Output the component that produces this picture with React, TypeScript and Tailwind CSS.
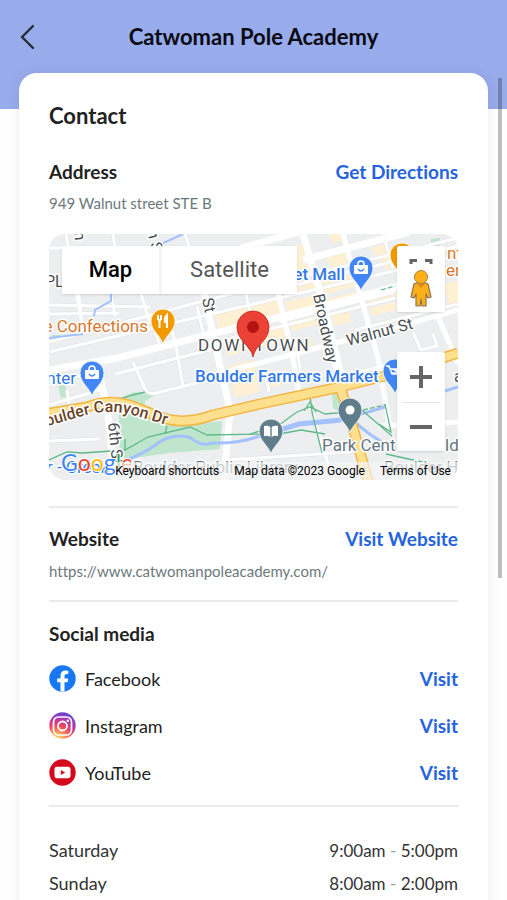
import type { ReactNode } from "react";

const hours = [
  { day: "Saturday", time: ["9:00am", "5:00pm"] },
  { day: "Sunday", time: ["8:00am", "2:00pm"] },
];

function Pin({ x, y, color, children }: { x: number; y: number; color: string; children?: ReactNode }) {
  return (
    <g transform={`translate(${x} ${y})`}>
      <path d="M0 23 C-2 15 -12 10 -12 0 A12 12 0 0 1 12 0 C12 10 2 15 0 23Z" fill={color} stroke="#fff" strokeWidth="0.8" />
      {children}
    </g>
  );
}

function Bag() {
  return (
    <>
      <rect x="-7" y="-3" width="14" height="9" rx="1" fill="#fff" />
      <path d="M-3 -2 V-4 A3 3 0 0 1 3 -4 V-2" fill="none" stroke="#fff" strokeWidth="1.6" />
      <path d="M-3 1 Q0 5 3 1" fill="none" stroke="#4285f4" strokeWidth="1.4" />
    </>
  );
}

function StreetMap() {
  return (
    <svg
      viewBox="0 0 409 246"
      preserveAspectRatio="xMidYMid slice"
      className="block h-full w-full font-['Roboto',sans-serif]"
      role="img"
      aria-label="Map of downtown Boulder"
    >
      <rect width="409" height="246" fill="#eceef0" />
      <g fill="#fdf0d3">
        <path d="M166 80 L232 64 L236 78 L169 95Z M207 42 L222 38 L226 52 L210 56Z M226 18 L256 10 L264 40 L232 48Z" />
        <path d="M230 52 L264 44 L268 56 L233 65Z M236 68 L270 60 L274 72 L239 80Z M240 85 L276 76 L279 88 L243 97Z" />
        <path d="M277 24 L296 19 L299 30 L282 34Z M272 48 L306 40 L309 52 L276 60Z M277 65 L311 57 L314 68 L280 76Z M283 81 L300 77 L302 88 L285 92Z" />
        <path d="M280 0 L293 -3 L296 6 L283 9Z M322 14 L338 10 L346 34 L338 36Z M315 58 L346 50 L349 62 L318 70Z M320 74 L346 68 L348 76 L323 82Z M395 50 L409 46 L409 70 L400 72Z" />
        <path d="M174 108 L236 92 L240 106 L178 122Z M178 132 L205 126 L210 158 L186 164Z M246 108 L262 104 L264 113 L248 116Z M216 142 L232 136 L234 150 L218 154Z" />
      </g>
      <g fill="#bfe6cc">
        <path d="M63 167 L85 158 L108 160 L96 167 L96 176Z" />
        <path d="M70 178 Q104 184 128 192 L173 187 L171 215 L120 219 L78 225 L71 228Z" />
        <path d="M283 157 L291 156 L293 180 L284 174Z M9 151 L16 151 L19 163 L12 164Z M382 5 L391 4 L390 12 L382 12Z M3 101 L11 101 L11 105 L3 105Z" />
      </g>
      {/* side streets, with a thin grey edge under the white */}
      <g fill="none" strokeLinejoin="round">
        {["stroke-[#dfe2e5] stroke-[4px]", "stroke-white stroke-[3px]"].map((look) => (
          <g key={look} className={look}>
            <path d="M0 14 H60 M17 0 L32 86 M64 0 L66 14 M136 0 L146 30 M0 71 L101 73 M0 80 L70 79" />
            <path d="M30 60 L34 100 M92 60 L101 90 M62 60 L66 82" />
            <path d="M0 108 L158 66 L409 4 M0 118 L162 80 L409 22 M106 98 L112 114" />
            <path d="M118 78 L127 112 L134 152 M148 72 L154 98 M196 56 L202 82" />
            <path d="M0 171 L54 155 M0 148 L40 140 M18 156 L20 170 M66 140 L168 114" />
            <path d="M84 128 L97 157 Q101 161 107 159 L172 143" />
            <path d="M202 80 L206 108 M216 138 L220 158 M246 104 L252 140 M278 108 L286 136" />
            <path d="M334 0 L344 34 M230 55 L409 12 M306 96 L409 70 M364 98 L372 116 L388 112 L384 100" />
            <path d="M174 106 L250 88 L346 64 M230 88 L346 58 M300 140 L344 130" />
            <path d="M176 226 L300 218 M264 180 L284 246 M0 207 L50 205" />
          </g>
        ))}
      </g>
      <g fill="none" stroke="#fff" strokeWidth="7" strokeLinejoin="round">
        <path d="M0 136 L68 124 L158 101 L268 74 L350 52" />
        <path d="M180 137 L268 114 L344 94 L409 76" strokeWidth="5" />
        <path d="M153 50 L166 110 L181 176 L175 246" />
        <path d="M228 55 L243 119 L250 160" strokeWidth="5" />
        <path d="M254 0 L273 65 L288 125 L295 153" />
        <path d="M294 0 L311 60 L329 124 L341 194" strokeWidth="5" />
        <path d="M50 140 L58 173 L66 246" />
        <path d="M192 14 L250 -2 M254 26 L360 -2" />
        <path d="M388 80 L409 130 M330 192 L409 188" strokeWidth="5" />
      </g>
      {/* creek */}
      <g fill="none" stroke="#a3c1fb" strokeWidth="3">
        <path d="M78 226 Q98 218 112 207 Q128 199 142 204 Q152 213 163 209 Q188 210 211 202 L250 190 L292 186 L336 173" />
        <path d="M301 183 Q320 203 348 216 M386 160 L409 153" />
        <path d="M112 10 L134 0 M62 60 L62 67 L46 76 L45 82 M0 104 L34 100" strokeWidth="2" />
      </g>
      <path d="M211 202 L250 190 L292 186" fill="none" stroke="#a3c1fb" strokeWidth="5" />
      <g fill="none" stroke="#60b98a" strokeWidth="1.3">
        <path d="M0 226 L18 218 L34 219 L76 216 L99 203 L141 193 L158 201 L211 200 M64 167 L84 161 L96 158 M118 192 L116 200 M76 205 L76 216" />
        <path d="M201 200 L230 191 L248 178 L261 173 L276 180 L300 178 L314 177 M261 162 L263 178 L273 219 M255 177 L261 168 L267 178 M230 200 L252 196 L276 200" />
        <path d="M314 177 L343 202 M330 190 L342 198 L336 170 M337 220 L382 230" />
        <path d="M314 176 L336 171 M332 56 L346 52" strokeDasharray="5 2" />
      </g>
      {/* main highway */}
      <g fill="none" strokeLinejoin="round">
        <path d="M-4 180 L38 173 Q64 163 88 174 L114 184 Q136 191 164 181 L211 170 L291 153 L348 139 L409 119 M291 153 L301 183 L320 250" stroke="#f2b541" strokeWidth="11" />
        <path d="M-4 180 L38 173 Q64 163 88 174 L114 184 Q136 191 164 181 L211 170 L291 153 L348 139 L409 119 M291 153 L301 183 L320 250" stroke="#fde08e" strokeWidth="8" />
      </g>

      {/* street names */}
      <g fontSize="16" fill="#4b4f53" stroke="#fff" strokeWidth="3" paintOrder="stroke" strokeLinejoin="round">
        <text transform="translate(299 112) rotate(-15)">Walnut St</text>
        <text transform="translate(264 61) rotate(78)">Broadway</text>
        <text transform="translate(153 65) rotate(78)">St</text>
        <text transform="translate(59 189) rotate(84)">6th St</text>
        <text transform="translate(25 -2) rotate(84)">h</text>
        <text transform="translate(98 -3) rotate(76)">h S</text>
        <text x="-4" y="53">PL</text>
        <text x="405" y="148">a</text>
        <text x="149" y="117" fontSize="17" className="tracking-widest">DOWNTOWN</text>
      </g>
      <path id="canyon" d="M-12 195 L30 183 Q58 174 84 181 L134 196" fill="none" />
      <text fontSize="16" fontWeight="500" fill="#6a4328" stroke="#fff" strokeWidth="3" paintOrder="stroke">
        <textPath href="#canyon">Boulder Canyon Dr</textPath>
      </text>

      {/* place names */}
      <g fontSize="17" stroke="#fff" strokeWidth="3" paintOrder="stroke" strokeLinejoin="round">
        <g fill="#d8782d">
          <text x="99" y="98" textAnchor="end">e Confections</text>
          <text x="398" y="25">nt</text>
          <text x="397" y="42">er</text>
        </g>
        <g fill="#3179e8" fontWeight="500">
          <text x="296" y="46" textAnchor="end">et Mall</text>
          <text x="27" y="150" textAnchor="end" fontWeight="400">nter</text>
          <text x="146" y="148">Boulder Farmers Market</text>
          <text x="-2" y="239" fontWeight="400">r - Creek</text>
        </g>
        <g fill="#64757e">
          <text x="273" y="217">Park Cent</text>
          <text x="396" y="217">ld</text>
          <text x="84" y="239">Boulder Public Library</text>
          <text x="335" y="239">Boulder Hi</text>
        </g>
      </g>

      <Pin x={353} y={21} color="#f29900" />
      <Pin x={114} y={87} color="#f29900">
        <path d="M-5 -6 V-1 M-2 -6 V-1 M-3.5 -1 V7 M-5 -1 H-2 M4 7 V-6 Q1 -3 2 1 H4" fill="none" stroke="#fff" strokeWidth="2" />
      </Pin>
      <Pin x={312} y={34} color="#4285f4"><Bag /></Pin>
      <Pin x={43} y={139} color="#4285f4"><Bag /></Pin>
      <Pin x={346} y={137} color="#4285f4">
        <path d="M-9 -5 H-6 L-3 3 H5 M-5 -2 H6 L4 2 H-3" fill="#fff" stroke="#fff" strokeWidth="1.5" />
      </Pin>
      <Pin x={222} y={197} color="#607d8b">
        <path d="M-7 -5 Q-3 -6 -0.7 -4 V6 Q-3 4 -7 5Z M7 -5 Q3 -6 0.7 -4 V6 Q3 4 7 5Z" fill="#fff" />
      </Pin>
      <Pin x={301} y={176} color="#607d8b"><circle r="4.5" fill="#fff" /></Pin>
      <g transform="translate(204 93)">
        <path d="M0 30 C-2 18 -16 14 -16 0 A16 16 0 0 1 16 0 C16 14 2 18 0 30Z" fill="#ea4335" stroke="#c5221f" strokeWidth="0.8" />
        <circle r="6" fill="#b31412" />
      </g>
    </svg>
  );
}

function MapPanel() {
  return (
    <div className="relative mt-[21px] h-[246px] overflow-hidden rounded-2xl font-['Roboto',sans-serif]">
      <StreetMap />
      <div className="absolute top-3 left-[13px] flex gap-[3px] bg-[#f4f4f4] text-[22px] leading-6 shadow-sm">
        <button type="button" className="h-12 w-[97px] bg-white font-medium text-black">Map</button>
        <button type="button" className="h-12 w-[135px] bg-white text-[#565656]">Satellite</button>
      </div>
      <div className="absolute top-3 right-[13px] h-[66px] w-12 rounded-xs bg-white shadow-sm">
        <button type="button" aria-label="Toggle fullscreen view" className="block h-6 w-12">
          <svg viewBox="0 0 48 24" className="h-6 w-12" fill="none" stroke="#666" strokeWidth="3">
            <path d="M14 18 V14.5 H20 M28 14.5 H34 V18" />
          </svg>
        </button>
        <button type="button" aria-label="Street View pegman" className="block h-[42px] w-12">
          <svg viewBox="0 0 48 42" className="h-[42px] w-12">
            <path d="M17 14 Q24 10 31 14 L34 27 L31 28 L29 24 L29 36 H25 L24 29 L23 36 H19 L19 24 L17 28 L14 27Z" fill="#fbb017" stroke="#8b7355" strokeWidth="1.2" strokeLinejoin="round" />
            <path d="M19 13 H29 L24 18Z" fill="#e58a1f" />
            <circle cx="24" cy="7" r="6.5" fill="#fbb017" stroke="#a98342" strokeWidth="1" />
          </svg>
        </button>
      </div>
      <div className="absolute right-[13px] bottom-[29px] w-12 rounded-xs bg-white shadow-sm">
        <button type="button" aria-label="Zoom in" className="flex h-[50px] w-12 items-center justify-center">
          <svg viewBox="0 0 22 22" className="h-[22px] w-[22px]" stroke="#666" strokeWidth="4"><path d="M0 11 H22 M11 0 V22" /></svg>
        </button>
        <div className="mx-[5px] h-px bg-[#e6e6e6]" />
        <button type="button" aria-label="Zoom out" className="flex h-12 w-12 items-center justify-center">
          <svg viewBox="0 0 22 22" className="h-[22px] w-[22px]" stroke="#666" strokeWidth="4"><path d="M0 11 H22" /></svg>
        </button>
      </div>
      <a href="#google" aria-label="Google" className="absolute bottom-0 left-3">
        <svg viewBox="0 0 70 30" className="h-[30px] w-[70px]" fontSize="23" stroke="#fff" strokeWidth="2" paintOrder="stroke">
          <text x="0" y="21" className="font-['Lato',sans-serif]">
            <tspan fill="#4285f4">G</tspan>
            <tspan fill="#ea4335">o</tspan>
            <tspan fill="#fbbc05">o</tspan>
            <tspan fill="#4285f4">g</tspan>
            <tspan fill="#34a853">l</tspan>
            <tspan fill="#ea4335">e</tspan>
          </text>
        </svg>
      </a>
      <div className="absolute right-0 bottom-0 flex h-[18px] items-center gap-[15px] bg-[#f5f5f5]/70 pr-[7px] text-xs whitespace-nowrap text-black">
        <button type="button">Keyboard shortcuts</button>
        <span>Map data ©2023 Google</span>
        <a href="#terms">Terms of Use</a>
      </div>
    </div>
  );
}

const icons = {
  Facebook: (
    <svg viewBox="0 0 27 27" className="h-[27px] w-[27px]" aria-hidden="true">
      <circle cx="13.5" cy="13.5" r="13.2" fill="#1877f2" />
      <path d="M11.5 26.6 V17.3 H8.2 V13.5 H11.5 V10.6 C11.5 7.3 13.5 5.5 16.5 5.5 C17.9 5.5 19.3 5.8 19.3 5.8 V9 H17.7 C16 9 15.5 10 15.5 11.1 V13.5 H19.2 L18.6 17.3 H15.5 V26.6 Z" fill="#fff" />
    </svg>
  ),
  Instagram: (
    <svg viewBox="0 0 27 27" className="h-[27px] w-[27px]" aria-hidden="true">
      <defs>
        <radialGradient id="insta" cx="0.3" cy="1.05" r="1.1">
          <stop offset="0" stopColor="#fee06b" />
          <stop offset="0.25" stopColor="#fca45c" />
          <stop offset="0.5" stopColor="#f0485e" />
          <stop offset="0.72" stopColor="#b936a8" />
          <stop offset="1" stopColor="#5648d8" />
        </radialGradient>
      </defs>
      <circle cx="13.5" cy="13.5" r="13.2" fill="url(#insta)" />
      <rect x="4.5" y="5" width="18" height="18" rx="5" fill="none" stroke="#fff" strokeWidth="1.7" />
      <circle cx="13.5" cy="14" r="4.5" fill="none" stroke="#fff" strokeWidth="1.8" />
      <circle cx="18.8" cy="8.8" r="1.2" fill="#fff" />
    </svg>
  ),
  YouTube: (
    <svg viewBox="0 0 27 27" className="h-[27px] w-[27px]" aria-hidden="true">
      <circle cx="13.5" cy="13.5" r="13.2" fill="#d40a1c" />
      <rect x="5.5" y="7.8" width="16" height="11.4" rx="2.6" fill="#fff" />
      <path d="M11.8 11 L16.2 13.5 L11.8 16Z" fill="#d40a1c" />
    </svg>
  ),
};

const networks = ["Facebook", "Instagram", "YouTube"] as const;

function SectionHead({ title, action }: { title: string; action?: string }) {
  return (
    <div className="flex items-center justify-between text-[19px] leading-[26px] font-bold">
      <h3>{title}</h3>
      {action && <a href="#open" className="text-[#2563e0]">{action}</a>}
    </div>
  );
}

export default function App() {
  return (
    <div className="relative h-screen overflow-hidden bg-[#fefefe] font-['Lato',sans-serif] text-[#222] [font-variant-ligatures:none]">
      <header className="h-[109px] bg-[#98abea]">
        <div className="grid h-[73px] grid-cols-[48px_1fr_48px] items-center">
          <button type="button" aria-label="Back" className="flex h-12 items-center pl-5">
            <svg viewBox="0 0 14 26" className="h-[26px] w-[14px]" fill="none" stroke="#272a35" strokeWidth="2.4" strokeLinecap="round" strokeLinejoin="round">
              <path d="M13 2 L2 13 L13 24" />
            </svg>
          </button>
          <h1 className="text-center text-[22px] leading-[30px] font-bold text-[#080a12]">Catwoman Pole Academy</h1>
        </div>
      </header>

      <main className="relative mx-[19px] -mt-9 rounded-[18px] bg-white px-[30px] pt-7 pb-8 shadow-[0_0_12px_rgba(60,60,100,0.09)]">
        <h2 className="text-[22px] leading-[30px] font-bold">Contact</h2>

        <section className="mt-7">
          <SectionHead title="Address" action="Get Directions" />
          <p className="mt-2 text-[15px] leading-5 text-[#6c797c]">949 Walnut street STE B</p>
          <MapPanel />
        </section>

        <section className="mt-[26px] border-t-2 border-[#e9eaea] pt-[18px]">
          <SectionHead title="Website" action="Visit Website" />
          <p className="mt-[9px] text-[15px] leading-5 text-[#6c797c]">https://www.catwomanpoleacademy.com/</p>
        </section>

        <section className="mt-[19px] border-t-2 border-[#e9eaea] pt-[19px]">
          <SectionHead title="Social media" />
          <ul className="mt-2">
            {networks.map((name) => (
              <li key={name} className="flex h-[47px] items-center text-lg leading-6">
                {icons[name]}
                <span className="ml-[9px] flex-1">{name}</span>
                <a href="#visit" className="text-[19px] font-bold text-[#2563e0]">Visit</a>
              </li>
            ))}
          </ul>
        </section>

        <section className="mt-[9px] border-t-2 border-[#e9eaea] pt-[27px]">
          <dl className="text-lg leading-[33px] text-[#333]">
            {hours.map(({ day, time }) => (
              <div key={day} className="flex justify-between">
                <dt>{day}</dt>
                <dd className="text-[17px]">
                  {time[0]} <span className="text-[#999]">-</span> {time[1]}
                </dd>
              </div>
            ))}
          </dl>
        </section>
      </main>

      <div className="absolute top-[78px] right-[5px] h-[500px] w-1 bg-black/25" />
    </div>
  );
}
